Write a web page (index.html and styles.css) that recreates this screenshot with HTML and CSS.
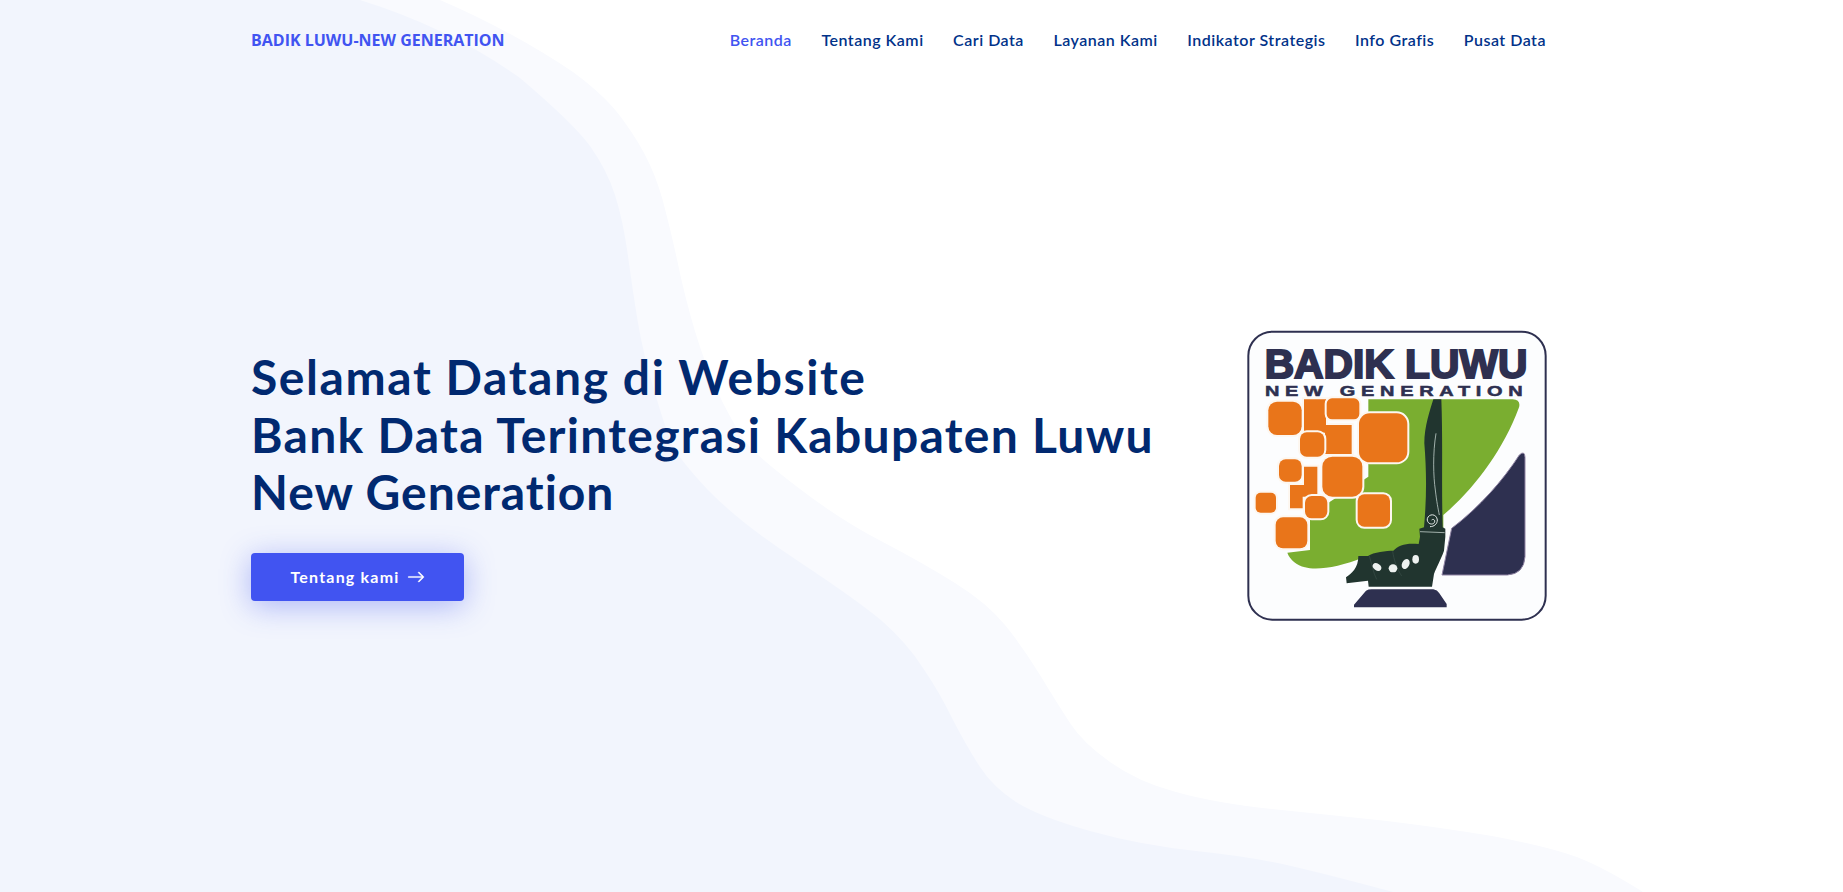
FILE: index.html
```html
<!DOCTYPE html>
<html lang="id">
<head>
<meta charset="utf-8">
<title>Badik Luwu-New Generation</title>
<link rel="stylesheet" href="styles.css">
</head>
<body>
<div class="page">
  <svg class="waves" width="1843" height="892" viewBox="0 0 1843 892" aria-hidden="true">
    <path class="wave-light" d="M440 0 Q510 30 573 72 Q607 97 623 120 Q640 143 650 165 Q660 187 666 213 Q673 240 681 278 Q690 317 700 347 Q710 377 723 403 Q737 430 745 441 Q753 453 796 486 Q840 520 881 541 Q923 563 955 583 Q987 603 1005 625 Q1023 647 1040 675 Q1057 703 1070 723 Q1083 743 1110 762 Q1138 782 1176 792 Q1215 803 1272 809 Q1330 815 1387 821 Q1444 828 1492 836 Q1540 845 1568 854 Q1597 863 1643 892 L0 892 L0 0 Z"/>
    <path class="wave-dark" d="M360 0 Q450 28 520 78 Q573 123 590 146 Q607 170 615 195 Q623 220 628 256 Q633 293 638 323 Q643 353 654 390 Q665 427 671 442 Q677 457 708 490 Q740 523 798 561 Q857 600 882 621 Q907 643 923 668 Q940 693 953 720 Q967 747 980 767 Q993 787 1016 802 Q1040 817 1090 831 Q1140 845 1196 851 Q1253 857 1291 866 Q1330 875 1393 892 L0 892 L0 0 Z"/>
  </svg>

  <header class="header">
    <div class="container header-row">
      <a class="brand" href="#">BADIK LUWU-NEW GENERATION</a>
      <nav class="nav">
        <a class="nav-link active" href="#">Beranda</a>
        <a class="nav-link" href="#">Tentang Kami</a>
        <a class="nav-link" href="#">Cari Data</a>
        <a class="nav-link" href="#">Layanan Kami</a>
        <a class="nav-link" href="#">Indikator Strategis</a>
        <a class="nav-link" href="#">Info Grafis</a>
        <a class="nav-link" href="#">Pusat Data</a>
      </nav>
    </div>
  </header>

  <main class="hero">
    <div class="container hero-row">
      <div class="hero-text">
        <h1 class="title"><span class="line-a">Selamat Datang di Website</span><br>Bank Data Terintegrasi Kabupaten Luwu<br><span class="line-c">New Generation</span></h1>
        <a class="btn" href="#">
          <span>Tentang kami</span>
          <svg class="btn-arrow" width="18" height="18" viewBox="0 0 16 16" aria-hidden="true"><path d="M1 8a.5.5 0 0 1 .5-.5h11.793l-3.147-3.146a.5.5 0 0 1 .708-.708l4 4a.5.5 0 0 1 0 .708l-4 4a.5.5 0 0 1-.708-.708L13.293 8.5H1.5A.5.5 0 0 1 1 8z"/></svg>
        </a>
      </div>
      <svg class="logo" width="301" height="291" viewBox="48 60 903 873" role="img" aria-label="Badik Luwu New Generation">
        <rect class="logo-frame" x="55" y="65" width="892" height="864" rx="72"/>
        <text class="logo-title" x="104" y="204" textLength="788" lengthAdjust="spacingAndGlyphs">BADIK LUWU</text>
        <text class="logo-sub" x="105" y="258" textLength="790" lengthAdjust="spacingAndGlyphs">NEW GENERATION</text>

        <path class="logo-green" d="M415 268 L848 268 Q875 270 866 295 C820 420 730 540 640 615 L640 700 L400 742 C330 772 260 782 225 772 C200 765 180 750 172 728 L240 720 L240 630 L300 575 L415 500 Z"/>

        <path class="logo-navy" d="M868 435 Q884 420 885 442 L885 740 Q882 792 832 795 L636 795 L665 655 C750 590 820 510 868 435 Z"/>

        <g class="logo-squares">
          <path d="M222 268 H288 V345 H365 V432 H285 V368 H222 Z"/>
          <path d="M222 470 H262 V560 H218 V595 H180 V525 H222 Z"/>
          <rect x="115" y="275" width="100" height="100" rx="26"/>
          <rect x="290" y="265" width="98" height="63" rx="16"/>
          <rect x="387" y="310" width="145" height="147" rx="32"/>
          <rect x="210" y="367" width="73" height="73" rx="20"/>
          <rect x="147" y="448" width="68" height="67" rx="20"/>
          <rect x="277" y="440" width="120" height="120" rx="30"/>
          <rect x="77" y="548" width="61" height="60" rx="15"/>
          <rect x="225" y="558" width="67" height="67" rx="20"/>
          <rect x="383" y="553" width="97" height="97" rx="20"/>
          <rect x="137" y="622" width="95" height="93" rx="22"/>
        </g>

        <path class="logo-knife" d="M610 268 L634 268 C639 400 634 520 638 652 L646 656 L646 680 L642 722 C632 750 620 770 612 792 L606 830 L416 830 L414 812 L350 820 L348 802 C365 790 385 775 385 738 L414 738 C430 726 470 722 490 722 C505 705 530 698 566 702 L570 680 L568 656 L582 652 C590 560 590 490 583 400 C583 350 600 300 610 268 Z"/>
        <path class="logo-fuller" d="M618 370 C608 430 610 500 616 540 C620 575 624 595 628 615"/>
        <path class="logo-spiral" d="M605 630 C612 624 618 634 611 640 C602 646 590 638 592 626 C596 610 620 610 622 630 C622 642 612 650 600 650"/>
        <path class="logo-fuller" d="M570 665 L644 668"/>
        <path class="logo-seam" d="M418 738 C425 760 430 790 440 808 M488 724 C492 750 500 775 515 798"/>
        <g class="logo-dots">
          <ellipse cx="441" cy="771" rx="14" ry="10" transform="rotate(35 441 771)"/>
          <ellipse cx="489" cy="775" rx="13" ry="12"/>
          <ellipse cx="527" cy="762" rx="11" ry="16" transform="rotate(25 527 762)"/>
          <ellipse cx="557" cy="748" rx="10" ry="13"/>
        </g>
        <path class="logo-base" d="M408 842 Q415 838 425 838 L610 838 Q622 840 628 850 L650 882 L650 892 L372 892 L372 884 Z"/>
      </svg>
    </div>
  </main>
</div>
</body>
</html>
```
FILE: styles.css
```css
* { box-sizing: border-box; }

html, body {
  margin: 0;
  padding: 0;
  background: #fff;
  overflow: hidden;
}

.page {
  position: relative;
  height: 892px;
  font-family: Lato, "Noto Sans", sans-serif;
}

.waves {
  position: absolute;
  top: 0;
  left: 0;
}

.wave-light { fill: #f9fafe; }
.wave-dark { fill: #f2f5fd; }

.container {
  position: relative;
  width: 1296px;
  margin-left: 251px;
}

.header-row {
  display: flex;
  align-items: center;
  justify-content: space-between;
  height: 78px;
  padding-right: 1px;
}

.brand {
  padding-top: 2px;
  font-family: "Open Sans", sans-serif;
  font-weight: 700;
  font-size: 16px;
  color: #4154f1;
  text-decoration: none;
}

.nav {
  display: flex;
  gap: 29.5px;
}

.nav-link {
  font-size: 16px;
  font-weight: 600;
  letter-spacing: 0.5px;
  color: #013289;
  text-decoration: none;
}

.nav-link.active { color: #4154f1; }

.hero {
  height: 814px;
  padding-bottom: 19px;
  display: flex;
  align-items: center;
}

.hero-row {
  display: flex;
  align-items: center;
  justify-content: space-between;
}

.hero-text { padding-bottom: 2px; }

.title {
  margin: 0 0 32px;
  font-size: 48px;
  line-height: 57.6px;
  font-weight: 700;
  letter-spacing: 1.3px;
  color: #012970;
  white-space: nowrap;
}

.line-a { letter-spacing: 1.58px; }
.line-c { letter-spacing: 0.96px; }

.btn {
  display: inline-flex;
  align-items: center;
  justify-content: center;
  gap: 7px;
  width: 213px;
  height: 48px;
  border-radius: 4px;
  background: #4154f1;
  box-shadow: 0 5px 30px rgba(65, 84, 241, 0.4);
  color: #fff;
  font-size: 16px;
  font-weight: 700;
  letter-spacing: 1.2px;
  text-decoration: none;
}

.btn-arrow { fill: #fff; stroke: #fff; stroke-width: 0.4; }

.logo { flex: none; display: block; }

.logo-frame { fill: #fcfdfe; stroke: #2e3050; stroke-width: 6; }
.logo-title { font-family: "Liberation Sans", sans-serif; font-weight: 700; font-size: 122px; fill: #2e3050; stroke: #2e3050; stroke-width: 6; }
.logo-sub { font-family: "Liberation Sans", sans-serif; font-weight: 700; font-size: 42px; letter-spacing: 12px; fill: #2e3050; stroke: #2e3050; stroke-width: 1.5; }
.logo-green { fill: #7aae30; }
.logo-navy { fill: #2e3050; stroke: #8f83a3; stroke-width: 3; }
.logo-squares rect, .logo-squares path { fill: #e9751a; stroke: #fdf7f0; stroke-width: 12; paint-order: stroke; }
.logo-knife { fill: #21352f; }
.logo-fuller { fill: none; stroke: #b9c8c3; stroke-width: 2.5; }
.logo-spiral { fill: none; stroke: #e6ecea; stroke-width: 3; }
.logo-seam { fill: none; stroke: #3a4f48; stroke-width: 2; }
.logo-dots ellipse { fill: #eef2f0; }
.logo-base { fill: #2e3050; }
```
